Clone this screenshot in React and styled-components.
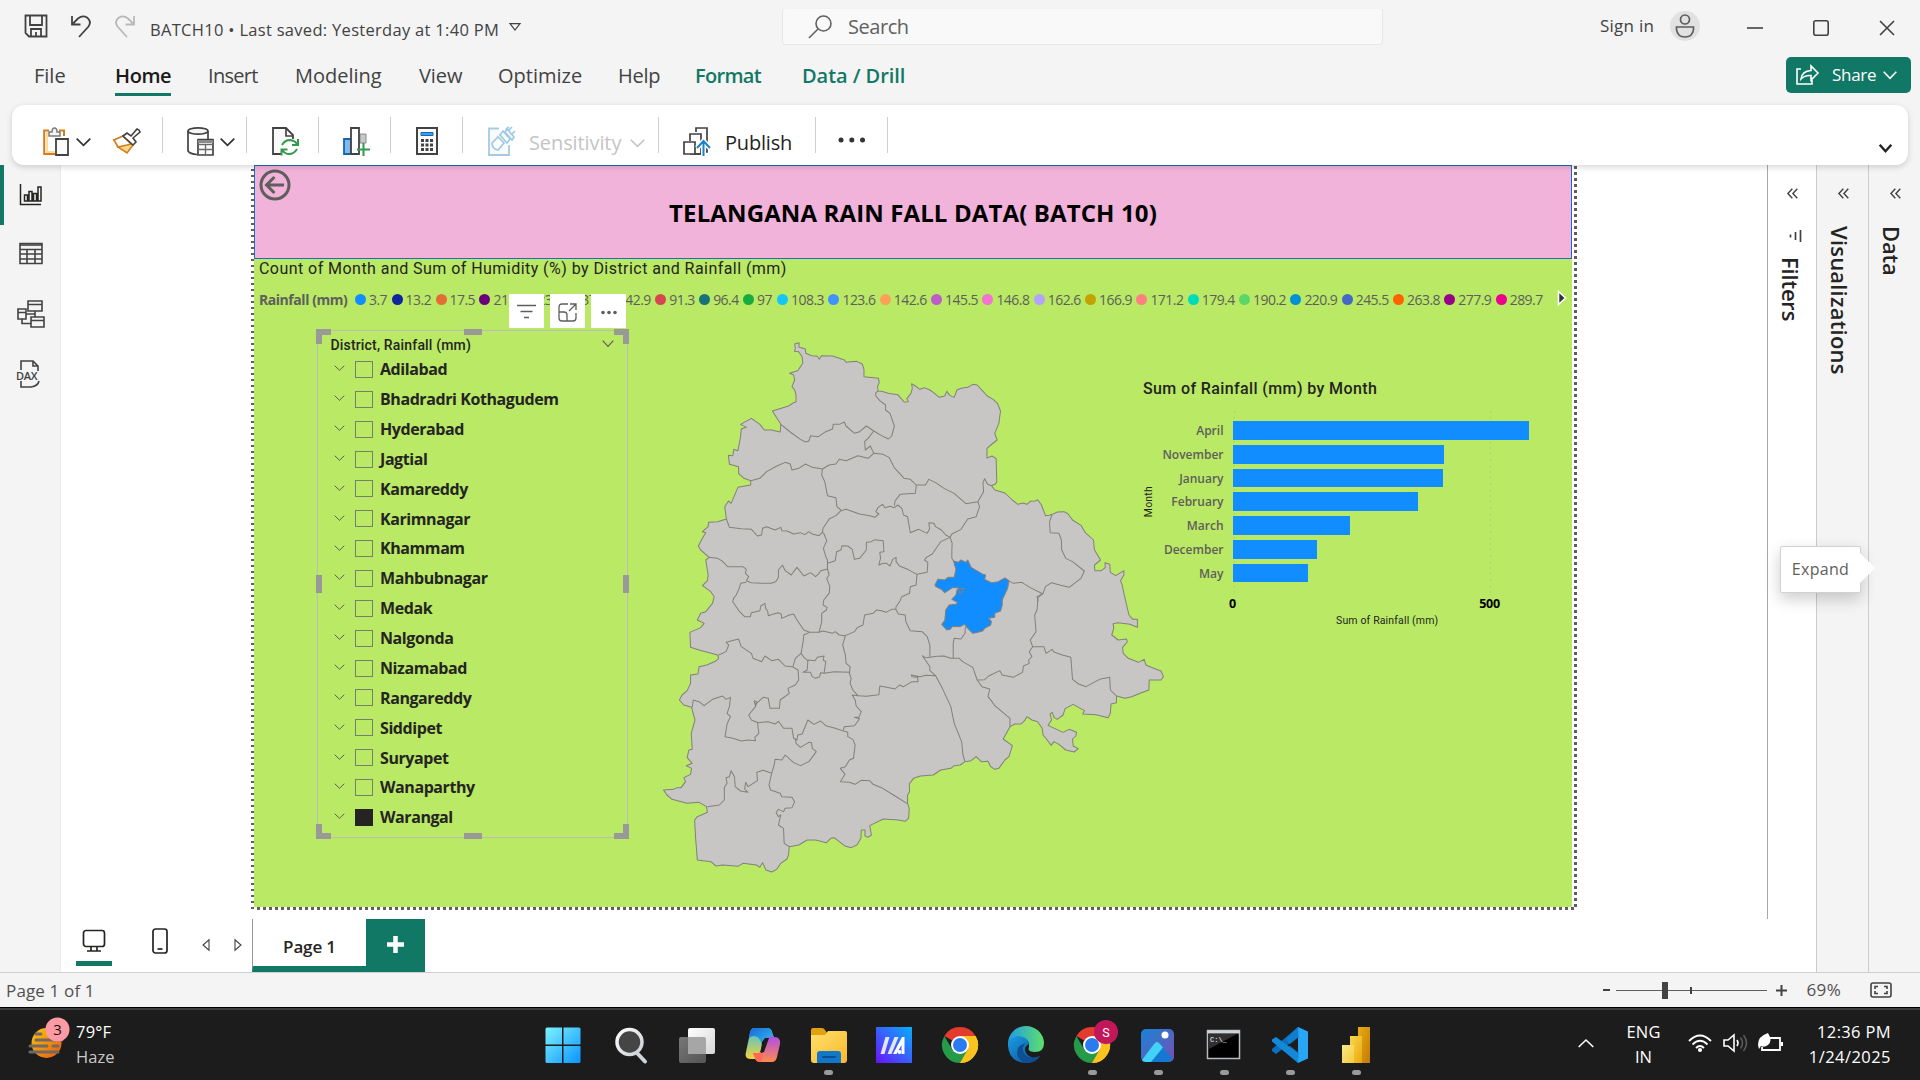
import React from "react";
import styled, { createGlobalStyle, css } from "styled-components";

const ui = '"Open Sans", "Noto Sans", sans-serif';
const din = 'Roboto, "Open Sans", sans-serif';
const teal = "#117865";

const Global = createGlobalStyle`
  * { box-sizing: border-box; }
  html, body { margin: 0; background: #f4f4f4; }
  body { font-family: ${ui}; overflow: hidden; }
  svg { display: block; flex: none; overflow: visible; }
`;

const Screen = styled.div`
  width: 1920px;
  height: 1080px;
  display: flex;
  flex-direction: column;
  background: #f4f4f4;
  overflow: hidden;
`;

const Label = styled.span`
  font-family: ${(p) => (p.$din ? din : ui)};
  font-size: ${(p) => p.$size || 16}px;
  font-weight: ${(p) => p.$weight || 400};
  letter-spacing: ${(p) => p.$ls || 0}px;
  color: ${(p) => p.$color || "#252423"};
  line-height: 1.2;
  white-space: nowrap;
  margin-left: ${(p) => p.$ml || 0}px;
  padding-top: ${(p) => p.$pt || 0}px;
`;

/* ---------- title bar ---------- */
const TitleBar = styled.header`
  height: 52px;
  display: flex;
  flex: none;
  align-items: flex-start;
`;
const QuickAccess = styled.div`
  display: flex;
  gap: 22px;
  padding: 14px 0 0 24px;
  width: 150px;
`;
const FileName = styled.div`
  display: flex;
  gap: 10px;
  padding-top: 20px;
  width: 632px;
`;
const SearchBox = styled.div`
  margin-top: 8px;
  width: 601px;
  height: 37px;
  display: flex;
  align-items: center;
  padding-left: 25px;
  background: #f9f9f9;
  border: 1px solid #e6e6e6;
  border-top-color: #f2f2f2;
  border-radius: 4px;
`;
const Account = styled.div`
  display: flex;
  align-items: center;
  height: 52px;
  margin-left: 217px;
  gap: 16px;
`;
const WindowButtons = styled.div`
  display: flex;
  align-items: center;
  height: 55px;
  margin-left: 47px;
  gap: 50px;
`;

/* ---------- ribbon ---------- */
const TabRow = styled.nav`
  height: 53px;
  flex: none;
  display: flex;
  position: relative;
  padding-left: 34px;
`;
const Tab = styled.div`
  width: ${(p) => p.$w}px;
  height: 45px;
  padding-top: 12px;
`;
const TabText = styled.div`
  width: max-content;
  font-size: 20px;
  line-height: 24px;
  letter-spacing: ${(p) => p.$ls}px;
  font-weight: ${(p) => (p.$kind ? 600 : 400)};
  color: ${(p) => (p.$kind === "context" ? teal : p.$kind === "active" ? "#1b1a19" : "#424242")};
  padding-bottom: 5px;
  border-bottom: 3px solid ${(p) => (p.$kind === "active" ? teal : "transparent")};
`;
const ShareButton = styled.button`
  margin: 5px 9px 0 auto;
  width: 125px;
  height: 36px;
  padding: 0 0 0 10px;
  display: flex;
  align-items: center;
  border: 0;
  border-radius: 5px;
  background: ${teal};
`;
const Ribbon = styled.div`
  height: 60px;
  flex: none;
  margin: 0 12px;
  padding: 0 16px 0 31px;
  display: flex;
  align-items: center;
  background: #fff;
  border-radius: 12px;
  box-shadow: 0 2px 6px rgba(0, 0, 0, 0.16);
  position: relative;
  z-index: 2;
`;
const Group = styled.div`
  width: ${(p) => p.$w}px;
  height: 36px;
  flex: none;
  padding-left: ${(p) => p.$pl || 0}px;
  display: flex;
  align-items: center;
  border-right: 1px solid #cfcfcf;
  padding-top: 12px;
`;
const RibbonEnd = styled.div`
  margin: 26px 0 0 auto;
`;

/* ---------- workspace ---------- */
const Workspace = styled.div`
  height: 807px;
  flex: none;
  display: flex;
`;
const Rail = styled.aside`
  width: 61px;
  border-right: 1px solid #ebebeb;
  background: #f4f4f4;
`;
const RailItem = styled.div`
  height: 59.6px;
  display: flex;
  align-items: center;
  padding-left: 13px;
  border-left: 4px solid ${(p) => (p.$active ? teal : "transparent")};
`;
const Main = styled.main`
  width: 1706px;
  background: #fff;
  display: flex;
  flex-direction: column;
`;
const Frame = styled.div`
  width: 1326px;
  height: 745px;
  flex: none;
  margin-left: 190px;
  padding: 0 5px 3px 3px;
  background:
    repeating-linear-gradient(to bottom, #fff 0 4px, #605e5c 4px 7px, #fff 7px 10px) 0 0 / 3px 6px repeat-y,
    repeating-linear-gradient(to right, #605e5c 0 3px, #fff 3px 6px) 0 742px / 6px 3px repeat-x,
    linear-gradient(to bottom, #fff 50%, #605e5c 50%) 1323px -2px / 3px 6px repeat-y;
`;
const Report = styled.section`
  height: 742px;
  background: #b9e965;
  display: flex;
  flex-direction: column;
`;
const Banner = styled.div`
  height: 94px;
  flex: none;
  border: 1px solid #1b6ec2;
  background: #f2b3da;
  display: grid;
  grid-template-columns: 40px 1fr 40px;
  justify-items: center;
`;
const BannerTitle = styled.h1`
  margin: 33px 0 0;
  font-size: 24px;
  line-height: 28px;
  font-weight: 700;
  letter-spacing: 0.12px;
  color: #000;
`;
const BackArrow = styled.div`
  padding: 3px 0 0 0;
`;
const LegendTitle = styled.div`
  height: 20px;
  padding-left: 5px;
  font: 400 16px/20px ${din};
  letter-spacing: 0.45px;
  color: #252423;
`;
const Legend = styled.div`
  height: 40px;
  display: flex;
  align-items: center;
  padding: 0 0 0 5px;
`;
const LegendName = styled.div`
  width: 96px;
  font-size: 14px;
  font-weight: 700;
  letter-spacing: -0.45px;
  color: #605e5c;
`;
const LegendItem = styled.div`
  width: ${(p) => p.$w}px;
  flex: none;
  display: flex;
  align-items: center;
  gap: 3px;
  font-size: 14px;
  letter-spacing: -0.55px;
  color: #605e5c;
  &::before {
    content: "";
    width: 11px;
    height: 11px;
    flex: none;
    border-radius: 50%;
    background: ${(p) => p.$c};
  }
`;
const LegendNext = styled.div`
  margin: -2px 0 0 10px;
`;
const Visuals = styled.div`
  display: flex;
`;

/* ---------- slicer ---------- */
const Slicer = styled.div`
  position: relative;
  margin: 11px 0 0 63px;
  width: 311px;
  height: 508px;
  flex: none;
  border: 1px solid #bdbdb8;
  padding: 6px 13px 0 12.5px;
`;
const Handle = styled.i`
  position: absolute;
  ${(p) => p.$at}
`;
const HoverBar = styled.div`
  position: absolute;
  right: 1px;
  top: -37px;
  display: flex;
  gap: 6px;
`;
const HoverButton = styled.div`
  width: 35px;
  height: 34px;
  display: grid;
  place-items: center;
  background: #fff;
`;
const SlicerHead = styled.div`
  display: flex;
  justify-content: space-between;
  height: 17.5px;
`;
const SlicerRow = styled.div`
  height: 29.87px;
  display: flex;
  align-items: center;
  padding-left: 3.5px;
`;
const Check = styled.span`
  width: 18px;
  height: 17px;
  margin: 0 7px 0 10px;
  flex: none;
  border: 1px solid ${(p) => (p.$on ? "#252423" : "#74806a")};
  background: ${(p) => (p.$on ? "#252423" : "transparent")};
`;

/* ---------- chart ---------- */
const MapBox = styled.div`
  margin: 11px 0 0 22px;
  width: 492px;
  flex: none;
`;
const Chart = styled.div`
  margin-top: 57px;
  width: 424px;
`;
const ChartTitle = styled.div`
  font: 500 16px/24px ${din};
  letter-spacing: 0.38px;
  color: #252423;
  padding: 1px 0 0 1px;
`;
const Plot = styled.div`
  display: grid;
  grid-template-columns: 19px 62.500px 1fr;
  margin-top: 10px;
`;
const AxisName = styled.div`
  writing-mode: vertical-rl;
  transform: rotate(180deg);
  justify-self: start;
  align-self: center;
  font: 400 10.5px/12px ${din};
  letter-spacing: 0.2px;
  color: #252423;
  margin: 0 0 2px 1px;
`;
const Categories = styled.div`
  padding-top: 8px;
`;
const Category = styled.div`
  height: 23.75px;
  line-height: 23.75px;
  text-align: right;
  font-size: 12px;
  font-weight: 600;
  color: #605e5c;
`;
const Bars = styled.div`
  margin-left: 9px;
  height: 183px;
  padding-top: 10px;
  display: flex;
  flex-direction: column;
  gap: 5px;
  background:
    linear-gradient(to bottom, #abd277 33%, transparent 33%) 1px 0 / 1px 6px repeat-y,
    linear-gradient(to bottom, #abd277 33%, transparent 33%) 257px 0 / 1px 6px repeat-y;
`;
const Bar = styled.div`
  height: 18.75px;
  flex: none;
  background: #118dff;
`;
const Ticks = styled.div`
  display: flex;
  margin: 1px 0 0 87px;
  font-size: 12.5px;
  line-height: 18px;
  font-weight: 700;
  letter-spacing: -0.2px;
  color: #000;
  justify-content: space-between;
  width: 271px;
`;
const ValueAxis = styled.div`
  margin: 1px 0 0 194px;
  font: 400 10.5px/14px ${din};
  letter-spacing: 0.15px;
  color: #252423;
`;

/* ---------- page bar ---------- */
const PageBar = styled.div`
  height: 53px;
  margin-top: 9px;
  display: flex;
`;
const ViewModes = styled.div`
  display: flex;
  width: 130px;
  padding-left: 15px;
  gap: 30px;
`;
const Mode = styled.div`
  width: 36px;
  height: 47px;
  padding-top: 9px;
  display: flex;
  justify-content: center;
  border-bottom: 0;
  background: ${(p) => (p.$on ? `linear-gradient(${teal}, ${teal}) 0 42px / 36px 5px no-repeat` : "none")};
`;
const PageArrows = styled.div`
  display: flex;
  gap: 24px;
  padding: 20px 0 0 11px;
  width: 61px;
`;
const PageTab = styled.div`
  width: 114px;
  height: 53px;
  display: grid;
  place-items: center;
  border-left: 1px solid #999;
  border-bottom: 6px solid ${teal};
`;
const AddPage = styled.div`
  width: 59px;
  display: grid;
  place-items: center;
  padding-bottom: 2px;
  background: ${teal};
`;

/* ---------- side panes ---------- */
const Pane = styled.aside`
  width: ${(p) => p.$w}px;
  flex: none;
  background: ${(p) => (p.$white ? "#fff" : "#f4f4f4")};
  border-left: ${(p) => (p.$white ? 0 : 1)}px solid #cccccc;
  display: flex;
  flex-direction: column;
  align-items: center;
  padding-top: 23px;
  position: relative;
`;
const FilterPane = styled(Pane)`
  background: linear-gradient(#a8a8a8, #a8a8a8) 0 0 / 1px 754px no-repeat #fff;
`;
const PaneName = styled.div`
  writing-mode: vertical-rl;
  font-size: 22px;
  line-height: 26px;
  font-weight: 600;
  letter-spacing: ${(p) => p.$ls}px;
  color: #252423;
  margin-top: ${(p) => p.$mt}px;
  margin-right: ${(p) => p.$mr || 0}px;
`;
const Tooltip = styled.div`
  position: absolute;
  left: 13px;
  top: 381px;
  width: 81px;
  height: 47px;
  z-index: 3;
  display: grid;
  place-items: center;
  background: #fff;
  border: 1px solid #d2d2d2;
  border-radius: 2px;
  box-shadow: 0 6px 16px rgba(0, 0, 0, 0.2);
  &::after {
    content: "";
    position: absolute;
    left: 79px;
    top: 6px;
    border: 15px solid transparent;
    border-left-color: #fff;
    border-right: 0;
  }
`;

/* ---------- status bar ---------- */
const StatusBar = styled.footer`
  height: 35px;
  flex: none;
  display: flex;
  align-items: center;
  padding: 0 28px 0 6px;
  border-top: 1px solid #cfcfcf;
`;
const Spacer = styled.div`
  flex: 1;
`;
const ZoomTrack = styled.div`
  width: 151px;
  height: 17px;
  margin: 0 9px 0 6px;
  background:
    linear-gradient(#424242, #424242) 46px 0 / 6px 17px no-repeat,
    linear-gradient(#424242, #424242) 74px 5px / 2px 7px no-repeat,
    linear-gradient(#605e5c, #605e5c) 0 8px / 151px 1px no-repeat;
`;

/* ---------- taskbar ---------- */
const Taskbar = styled.div`
  height: 73px;
  flex: none;
  display: flex;
  background: #1c1c1c;
  border-top: 1px solid #000;
  box-shadow: inset 0 2px 0 #3d3d3d;
`;
const Weather = styled.div`
  display: flex;
  width: 530px;
  padding: 10px 0 0 28px;
`;
const Lines = styled.div`
  display: flex;
  flex-direction: column;
  align-items: ${(p) => p.$align || "flex-start"};
  gap: 5px;
  width: ${(p) => p.$w}px;
  padding-top: 4px;
`;
const Apps = styled.div`
  display: flex;
  width: 860px;
`;
const AppSlot = styled.div`
  width: 65.94px;
  flex: none;
  padding-top: 18px;
  display: flex;
  flex-direction: column;
  align-items: center;
  gap: 6px;
  &:first-child {
    margin-right: 1.8px;
  }
  &::after {
    content: "";
    width: 9px;
    height: 5px;
    border-radius: 3px;
    background: ${(p) => (p.$run ? "#9a9a9a" : "transparent")};
  }
`;
const Tray = styled.div`
  flex: 1;
  display: flex;
  justify-content: flex-end;
  padding: 10px 29px 0 0;
`;
const TrayIcon = styled.div`
  width: ${(p) => p.$w}px;
  padding-top: ${(p) => p.$pt}px;
`;

/* ---------- drawing helpers ---------- */
const Line = styled.svg.attrs({ fill: "none" })`
  stroke: ${(p) => p.$c || "#424242"};
  stroke-width: ${(p) => p.$sw || 1.6};
  margin-left: ${(p) => p.$ml || 0}px;
  margin-top: ${(p) => p.$mt || 0}px;
`;

const Chevron = ({ w = 15, h = 8, c, sw, ml, mt }) => (
  <Line width={w} height={h} viewBox={`0 0 ${w} ${h}`} $c={c} $sw={sw} $ml={ml} $mt={mt}>
    <path d={`M.7.7 L${w / 2} ${h - 0.7} L${w - 0.7} .7`} />
  </Line>
);
const Collapse = () => (
  <Line width="11" height="11" viewBox="0 0 11 11" $sw={1.4} $ml={1}>
    <path d="M5.3.7L.9 5.5l4.4 4.8M10.3.7L5.9 5.5l4.4 4.8" />
  </Line>
);

/* ---------- map data ---------- */
const OUTLINE =
  "428,42 441,38 441,52 459,56 461,70 478,77 495,79 501,88 507,77 540,78 558,84 575,90 580,97 595,95 612,94 628,102 633,118 633,140 676,145 678,158 673,170 675,183 685,184 705,190 733,194 745,208 752,216 764,215 760,206 772,190 776,175 774,161 785,168 798,178 812,173 828,180 838,187 856,202 872,198 878,184 887,196 900,202 908,180 920,175 940,172 955,163 968,165 985,184 998,198 1015,208 1028,220 1037,243 1032,280 1020,310 1027,330 1012,342 997,355 997,384 1012,378 1024,386 1026,455 1022,462 1010,467 1020,480 1050,489 1072,510 1088,523 1104,519 1115,523 1125,514 1140,513 1147,509 1158,525 1170,557 1182,556 1190,553 1205,546 1225,545 1237,552 1250,570 1275,586 1288,608 1312,630 1315,660 1333,690 1315,705 1316,722 1335,722 1347,713 1346,698 1360,703 1362,727 1378,737 1402,722 1402,735 1392,752 1397,765 1402,790 1410,825 1417,855 1428,868 1442,868 1442,892 1420,883 1385,878 1370,881 1372,895 1366,915 1385,930 1410,927 1412,936 1398,952 1400,970 1415,985 1445,997 1462,988 1467,1005 1490,1015 1512,1023 1519,1040 1512,1050 1477,1050 1476,1080 1450,1090 1425,1100 1405,1105 1380,1098 1380,1118 1364,1122 1362,1150 1355,1163 1320,1154 1280,1152 1285,1142 1252,1123 1228,1136 1222,1155 1205,1168 1195,1162 1190,1147 1184,1152 1188,1170 1178,1186 1222,1207 1240,1198 1262,1207 1260,1218 1250,1227 1252,1248 1267,1256 1255,1266 1230,1260 1210,1243 1195,1235 1187,1246 1175,1230 1163,1215 1160,1195 1147,1175 1130,1170 1115,1160 1108,1172 1098,1182 1080,1182 1065,1190 1045,1227 1072,1247 1062,1280 1050,1290 1032,1315 1020,1318 1008,1310 1000,1294 980,1295 965,1280 950,1292 932,1295 918,1305 900,1307 890,1315 860,1320 838,1335 800,1338 780,1345 767,1362 768,1385 762,1395 762,1420 767,1435 765,1465 755,1474 735,1470 690,1467 650,1487 655,1515 645,1522 636,1518 636,1500 625,1500 624,1525 612,1545 595,1553 575,1547 560,1535 545,1523 535,1525 522,1538 490,1530 465,1530 440,1545 412,1550 410,1575 405,1587 387,1600 375,1618 360,1626 343,1620 333,1598 325,1612 315,1605 275,1600 260,1609 215,1605 195,1608 180,1595 140,1590 135,1525 132,1470 140,1460 170,1447 167,1430 145,1417 110,1420 65,1408 50,1395 40,1380 70,1378 80,1373 92,1373 105,1355 100,1343 120,1333 123,1315 107,1307 125,1300 110,1283 115,1260 125,1258 122,1210 133,1170 123,1132 100,1125 87,1110 95,1095 110,1082 120,1060 120,1035 142,1032 145,1010 168,1005 195,993 203,985 200,975 170,967 145,960 120,952 118,907 150,893 160,880 140,870 150,850 165,845 185,820 190,800 180,785 155,767 170,752 172,735 165,690 175,682 150,660 143,648 155,625 165,608 155,605 172,590 173,577 200,575 226,567 221,530 232,513 240,520 260,472 298,465 298,452 278,445 262,430 262,410 235,403 232,376 245,377 248,358 260,362 268,320 270,297 285,292 268,283 300,265 325,283 338,300 360,300 385,306 387,283 362,243 410,228 425,218 432,215 432,195 428,180 420,170 428,150 425,135 413,130 437,122 452,100 450,80 440,65 427,64 430,55";
const BORDERS = [
  "387,283 415,306 445,328 460,336 470,333 475,317 498,320 520,305 540,297 542,283 560,283 575,276 580,288 605,310 620,305 640,288 662,303 685,317 705,327 715,318 723,288 710,250 697,240 697,225 680,212 668,198 668,188 675,183",
  "662,303 645,325 635,335 637,360 652,348 662,370",
  "298,452 325,445 345,425 375,408 400,397 415,402 420,420 440,415 460,402 480,412 510,417 530,405 550,402 560,388 580,392 615,377 645,385 662,370 690,373 708,383 722,412 752,445 770,448 788,465 815,465 825,448 845,458 870,475 900,490 920,508 935,521 970,515 987,485 985,458 990,446 998,462 1010,467",
  "510,417 508,435 517,455 525,497 550,503 553,530 565,540",
  "788,465 785,490 740,493 725,513 723,527",
  "565,542 580,538 620,552 650,557 665,562 677,552 668,545 675,532 688,523 695,533 710,529 723,533 733,525 745,535 750,555 762,560 770,608 795,598 820,610 827,597 825,578 840,580 845,590 862,600 875,615 888,622",
  "970,515 975,530 965,560 940,567 920,598 893,612 888,622",
  "565,542 550,557 530,567 512,595 510,607 515,612 523,632 513,655 520,680 525,690 525,717",
  "226,567 235,592 270,596 300,598 318,618 330,615 333,595 345,590 370,600 387,592 390,602 405,603 425,612 445,608 458,614 470,605 480,612 500,617 512,605",
  "525,700 548,692 552,665 565,660 568,647 585,648 598,658 605,688 620,685 640,660 640,637 655,635 665,629 690,632 692,665 680,667 682,685 677,705 690,700 700,700 710,708 718,688 728,682 728,695 738,708 762,718 790,733 820,727 822,697 812,690 818,682 835,672 860,635 888,622",
  "888,622 894,640 893,660 893,685 902,700",
  "175,682 200,685 212,692 230,710 275,710 285,718 282,730 292,740 285,752 300,758 330,760 358,760 372,755 380,742 380,720 392,705 400,722 418,735 425,725 435,712 455,738 475,728 490,740 500,730 505,722 525,717",
  "285,757 268,760 264,775 255,795 247,805 245,815 265,845 280,860 297,860 300,848 325,842 328,828 340,820 342,835 348,843 350,857 378,848 388,852 390,865 412,855 425,852 435,870 455,900 472,907 500,907",
  "525,717 530,735 523,745 532,770 530,790 514,810 512,825 524,832 522,840 508,850 508,875 500,907",
  "790,733 787,765 770,770 768,790 745,800 740,812 728,830 727,838",
  "1190,553 1182,575 1184,608 1210,610 1217,630 1218,660 1230,685 1250,695 1285,723 1275,745 1240,772 1215,766 1188,758 1170,770 1163,790 1145,800 1148,815",
  "1060,752 1075,760 1100,757 1125,773 1163,792",
  "727,838 735,852 755,855 757,875 770,902 805,905 820,920 828,945 828,980",
  "500,907 512,903 540,910 548,905 560,915 578,917 605,905 613,893 630,885 635,855 660,850 670,840 685,842 698,847 715,838 727,838",
  "578,917 570,945 578,975 580,1000 592,1010 590,1030 595,1045 592,1060 600,1080 615,1097 598,1095 607,1110 610,1128 625,1145 618,1162 605,1162 620,1166 605,1187 575,1190 572,1200",
  "615,1097 640,1099 677,1094 680,1068 700,1072 725,1077 738,1065 750,1070 775,1055 793,1055 792,1042 775,1040 773,1035 800,1040 815,1036 845,1037",
  "815,983 806,977 828,1010 828,1022 845,1037 865,1075 890,1130 900,1180 922,1235 926,1275 932,1295",
  "815,983 850,979 870,978 890,985 915,985 925,995 955,1012 968,1050",
  "968,1050 990,1049 1002,1038 1035,1022 1042,1035 1075,1042 1102,1027 1105,1008 1122,1000 1120,990 1130,980 1122,965 1132,950",
  "968,1050 982,1070 1005,1077 1000,1100 1012,1115 1020,1127 1065,1165 1065,1190",
  "933,890 932,910 920,927 900,925 897,940 897,985",
  "1163,790 1148,803 1145,840 1138,855 1142,905 1125,930 1132,950 1165,950 1172,970 1190,958 1195,966 1220,975 1245,982 1250,1048 1268,1062 1290,1070 1330,1048 1360,1042 1362,1080 1380,1098",
  "203,975 225,965 233,945 225,937 262,927 270,950 300,970 305,985 330,995 340,978 360,992 380,988 400,1008 420,1010 438,1020 440,1050 430,1065 408,1075 412,1090 385,1110 383,1135 355,1135 350,1105 335,1102 315,1120 312,1130 292,1155 300,1170 320,1178 350,1175 370,1182 380,1174 395,1195 420,1195 425,1225 435,1230 437,1215 450,1212 467,1170 485,1183 505,1173 520,1187 545,1194 570,1202 585,1207 585,1220 600,1228 607,1245 602,1285 590,1290 578,1310 563,1315 577,1333 563,1355 590,1357 607,1363 625,1351 650,1352 660,1363 685,1373 725,1398 760,1420",
  "472,907 455,915 453,935 447,970 430,985 423,1010",
  "447,970 455,982 467,992 465,1020 452,1027 475,1027 480,1040 490,1045 502,1040 505,1028 515,1030 520,995 512,990 515,978 495,982 488,992 467,990",
  "515,1030 545,1025 592,1027",
  "125,1132 128,1110 145,1115 160,1127 185,1108 215,1098 225,1108 238,1102 235,1130 228,1150 238,1160 228,1182 222,1220 245,1225 270,1233 290,1230 312,1232 310,1222 322,1210 318,1178",
  "308,1112 315,1115 312,1127 308,1112",
  "430,1225 432,1240 445,1252 470,1237 478,1238 480,1255 492,1265 470,1295 445,1307 425,1298 400,1275 390,1290 370,1288 368,1302 360,1330 352,1365 357,1380 385,1390 390,1400 420,1402 428,1415 420,1433 400,1435 395,1445 380,1438 373,1448 380,1460 387,1455 380,1485 395,1495 397,1540 412,1550",
  "360,1330 335,1321 316,1327 318,1352 290,1370 283,1357 280,1377 290,1387 268,1383 252,1370 250,1340 240,1322 235,1340 225,1343 228,1360 220,1372 220,1410 205,1425 170,1430",
];
const SELECTED =
  "898,693 912,697 920,690 935,697 940,690 950,712 985,733 993,735 990,748 1010,758 1030,755 1050,744 1062,752 1058,775 1042,810 1042,825 1037,843 1020,850 1020,862 1002,865 1010,875 1008,885 990,895 985,902 965,908 955,910 943,898 930,883 918,890 895,889 888,898 878,900 863,883 872,872 875,840 885,825 907,822 909,817 893,808 905,795 909,778 930,775 917,793 912,773 895,773 872,788 862,778 846,770 843,765 852,748 872,750 882,742 900,742 905,718";

const Telangana = () => (
  <svg width="530" height="546" viewBox="0 0 1568 1638" preserveAspectRatio="none" stroke="#83817b" strokeWidth="3" strokeLinejoin="round">
    <polygon points={OUTLINE} fill="#c8c6c4" />
    <g fill="none">
      {BORDERS.map((b) => (
        <polyline key={b} points={b} />
      ))}
    </g>
    <polygon points={SELECTED} fill="#118dff" />
  </svg>
);

/* ---------- data ---------- */
const TABS = [
  ["File", 81, "", 0],
  ["Home", 93, "active", -0.4],
  ["Insert", 87, "", -0.7],
  ["Modeling", 124, "", 0],
  ["View", 79, "", -0.1],
  ["Optimize", 120, "", 0],
  ["Help", 77, "", -0.3],
  ["Format", 107, "context", -0.7],
  ["Data / Drill", 120, "context", -0.05],
];
const LEGEND = [
  ["3.7", "#118dff"], ["13.2", "#12239e"], ["17.5", "#e66c37"], ["21.4", "#6b007b"],
  ["23.1", "#e044a7"], ["37.6", "#744ec2"], ["42.9", "#d9b300"], ["91.3", "#d64550"],
  ["96.4", "#197278"], ["97", "#1aab40"], ["108.3", "#15c6f4"], ["123.6", "#4092ff"],
  ["142.6", "#ffa058"], ["145.5", "#be5dc9"], ["146.8", "#f472d0"], ["162.6", "#b5a1ff"],
  ["166.9", "#c4a200"], ["171.2", "#ff8080"], ["179.4", "#00dbbc"], ["190.2", "#5bd667"],
  ["220.9", "#0091d5"], ["245.5", "#4668c5"], ["263.8", "#ff6300"], ["277.9", "#99008a"],
  ["289.7", "#ec008c"],
];
const LEGEND_WIDTH = { 2: 34, 3: 36.6, 4: 43.95, 5: 51.34 };
const DISTRICTS = ["Adilabad", "Bhadradri Kothagudem", "Hyderabad", "Jagtial", "Kamareddy", "Karimnagar", "Khammam", "Mahbubnagar", "Medak", "Nalgonda", "Nizamabad", "Rangareddy", "Siddipet", "Suryapet", "Wanaparthy", "Warangal"];
const MONTHS = [["April", 296.5], ["November", 211], ["January", 210], ["February", 185], ["March", 117], ["December", 84], ["May", 75]];

const g = "#9a9999";
const HANDLES = [
  css`left: -2px; top: -2px; width: 15px; height: 15px; border-left: 6px solid ${g}; border-top: 6px solid ${g};`,
  css`right: -2px; top: -2px; width: 15px; height: 15px; border-right: 6px solid ${g}; border-top: 6px solid ${g};`,
  css`left: -2px; bottom: -2px; width: 15px; height: 15px; border-left: 6px solid ${g}; border-bottom: 6px solid ${g};`,
  css`right: -2px; bottom: -2px; width: 15px; height: 15px; border-right: 6px solid ${g}; border-bottom: 6px solid ${g};`,
  css`left: 146px; top: -2px; width: 18px; height: 6px; background: ${g};`,
  css`left: 146px; bottom: -2px; width: 18px; height: 6px; background: ${g};`,
  css`left: -2px; top: 244px; width: 6px; height: 18px; background: ${g};`,
  css`right: -2px; top: 244px; width: 6px; height: 18px; background: ${g};`,
];

/* ---------- taskbar icons ---------- */
const Ico = ({ children }) => (
  <svg width="36" height="38" viewBox="0 0 36 38">{children}</svg>
);
const Chrome = () => (
  <g>
    <path d="M18 19L2.4 10A18 18 0 0 1 33.6 10z" fill="#e33b2e" />
    <path d="M18 19L33.6 10A18 18 0 0 1 18 37z" fill="#fcc31e" />
    <path d="M18 10H33.6A18 18 0 0 1 18 37L25.8 23.5z" fill="#fcc31e" />
    <path d="M18 37A18 18 0 0 1 2.4 10L10.2 23.5 18 28 25.8 23.5z" fill="#259b48" />
    <circle cx="18" cy="19" r="9" fill="#fff" />
    <circle cx="18" cy="19" r="7" fill="#2b7bf0" />
  </g>
);
const Grad = ({ id, a, b, y1 = 0, x2 = 1, y2 = 1 }) => (
  <linearGradient id={id} x1="0" y1={y1} x2={x2} y2={y2}>
    <stop offset="0" stopColor={a} />
    <stop offset="1" stopColor={b} />
  </linearGradient>
);

const APPS = [
  [false, <Ico><Grad id="win" a="#7ef2ff" b="#0a94ff" /><path fill="url(#win)" d="M.5 3Q.5 1.500 2 1.500H17v17H.5zM18.500 1.500H34q1.500 0 1.500 1.500v15.500h-17zM.5 20H17v17H2Q.5 37 .5 35.500zM18.500 20h17v15.500q0 1.500-1.500 1.500H18.500z" /></Ico>],
  [false, <Ico><Grad id="glass" a="#ffffff" b="#c9ced4" /><path d="M24 27l8 8.500" stroke="#d0d5da" strokeWidth="4" strokeLinecap="round" /><circle cx="16.500" cy="16" r="12.500" fill="#454545" stroke="url(#glass)" strokeWidth="3.500" /></Ico>],
  [false, <Ico><Grad id="tv" a="#fff" b="#d6d6d6" /><Grad id="tv2" a="#777" b="#555" /><rect x="0" y="11" width="27" height="26" rx="2" fill="url(#tv2)" /><rect x="9" y="2" width="27" height="26" rx="2" fill="url(#tv)" /><path d="M9 11h16q2 0 2 2v15H11q-2 0-2-2z" fill="#a6a6a6" /></Ico>],
  [false, <Ico><Grad id="c1" a="#1667dd" b="#3ec4e8" /><Grad id="c2" a="#35c0e8" b="#f5d23c" x2={0} /><Grad id="c3" a="#b04fe6" b="#ff8a4c" x2={0} /><path d="M9 2h13q4 0 5 4l2 6h-6q-4 0-5 4l-5 17H6q-7 0-5-7L5 7q1-5 4-5z" fill="url(#c2)" /><path d="M9 2h13q4 0 5 4l2 6h-6q-4 0-5 4l-1 4q-2-10-8-10Q6 10 4 12q1-10 5-10z" fill="url(#c1)" /><path d="M27 36H15q-4 0-5-4l-2-5h5q4 0 5-4l5-12h6q7 0 6 7l-3 13q-1 5-5 5z" fill="url(#c3)" /><path d="M15 36q-4 0-5-4l-2-5h5q4 0 5-4l-1 9q0 4-2 4z" fill="#ff6a54" /><path d="M17 16l3-4h4l-5 14-3 1z" fill="#1c1c1c" /></Ico>],
  [true, <Ico><Grad id="fold" a="#ffe06a" b="#f8b92e" /><path d="M0 4q0-2 2-2h9q2 0 3 2l2 3v5H0z" fill="#e2a10f" /><path d="M0 9h14l3-4h17q2 0 2 2v27q0 3-3 3H3q-3 0-3-3z" fill="url(#fold)" /><path d="M6 37V28q0-3 3-3h18q3 0 3 3v9z" fill="#1276c9" /><path d="M12 31h12" stroke="#0a4f90" strokeWidth="2" strokeLinecap="round" /></Ico>],
  [false, <Ico><Grad id="asus" a="#6a12fa" b="#06b0ff" y1={1} y2={0} /><path d="M0 1h36v36H0z" fill="url(#asus)" /><path d="M9.500 11h4L8.500 28H4.500zM18.500 11h4l-7 17h-4z" fill="#fff" opacity=".85" /><path d="M28.500 11v17h-3V19l-5 9h-3.500L26 11z" fill="#fff" /><circle cx="23.500" cy="26" r="2" fill="#fff" /></Ico>],
  [false, <Ico><Chrome /></Ico>],
  [false, <Ico><Grad id="e1" a="#1f9be8" b="#5fe06a" y2={0} /><Grad id="e2" a="#1b9de2" b="#0b4c9c" /><path d="M0 18A18 17.500 0 0 1 36 17q0 9-9 9-8 0-6-5 1-9-8-8Q3 13 0 22z" fill="url(#e1)" /><path d="M0 18q2-8 11-8 9 1 10 8-6 3-3 9 5 7 14 3-5 7-14 7Q0 36 0 18z" fill="url(#e2)" /><path d="M18 17q-5 4-2 10 6 8 16 3-4 7-13 7-9-2-10-10 0-8 9-10z" fill="#0d4f92" /></Ico>],
  [true, <Ico><Chrome /><circle cx="32" cy="6" r="12" fill="#c2185b" /><text x="32" y="10.500" textAnchor="middle" fontSize="12.500" fontFamily="Roboto, sans-serif" fill="#fff">S</text></Ico>],
  [true, <Ico><Grad id="ph" a="#1684d8" b="#7a4fb0" /><rect x="1" y="3" width="33" height="33" rx="5" fill="url(#ph)" /><path d="M2 34L14 18q3-4 6 0l13 15q-2 3-5 3H6q-3 0-4-2z" fill="#1778d2" /><path d="M2 34L14 18q3-4 6 0l3 3.500L11 36H6q-3 0-4-2z" fill="#42d2f8" /><circle cx="25" cy="9" r="3.500" fill="#fff" /></Ico>],
  [true, <Ico><rect x="1.500" y="4.500" width="32" height="28" fill="#000" stroke="#b8bcc0" strokeWidth="1.500" /><path d="M1.500 4.500h32v3h-32z" fill="#cfd4d8" /><path d="M3 8h28L3 23z" fill="#444" opacity=".7" /><text x="4" y="16" fontSize="7" fontFamily="Liberation Mono, monospace" fill="#fff">C:\_</text></Ico>],
  [true, <Ico><path d="M26 1l10 4.500v27L26 37z" fill="#28a5f5" /><path d="M26 1v10L4 28 0 25v-2z" fill="#0a6fbf" /><path d="M26 37V27L4 11 0 13.500v2z" fill="#1489d8" /><path d="M26 1l1 11-8 7 8 7-1 11-12-12 4-6-4-6z" fill="#1489d8" opacity=".6" /><path d="M26 12v14l-9-7z" fill="#1c1c1c" /></Ico>],
  [true, <Ico><Grad id="p1" a="#e8ad10" b="#c4780a" /><Grad id="p2" a="#fbd64c" b="#e7a80e" /><Grad id="p3" a="#fbe985" b="#f3cb3c" /><path d="M20 1h12v36H20z" fill="url(#p1)" /><path d="M12 10h12v27H12z" fill="url(#p2)" /><path d="M4 19h12v18H4z" fill="url(#p3)" /></Ico>],
];

export default function App() {
  return (
    <Screen>
      <Global />
      <TitleBar>
        <QuickAccess>
          <Line width="24" height="24" viewBox="0 0 24 24" $sw={1.8}>
            <path d="M1.500 1.500h21v21H5l-3.500-3.500zM6 2v9h12V2M7 22v-7h10v7M12 18v4" />
          </Line>
          <Line width="22" height="24" viewBox="0 0 22 24" $sw={1.8}>
            <path d="M2 2v8.500h8.500M2.500 10L8 4.500Q12.500 1 17 3.500q5 4 1.500 9L9 23" />
          </Line>
          <Line width="22" height="24" viewBox="0 0 22 24" $sw={1.8} $c="#b8b8b8">
            <path d="M20 2v8.500h-8.500M19.500 10L14 4.500Q9.500 1 5 3.500q-5 4-1.500 9L13 23" />
          </Line>
        </QuickAccess>
        <FileName>
          <Label $size={16.5} $ls={0.3} $color="#424242">BATCH10 • Last saved: Yesterday at 1:40 PM</Label>
          <Line width="12" height="8" viewBox="0 0 12 8" $sw={1.2} $mt={3}><path d="M1 .7h10L6 7z" /></Line>
        </FileName>
        <SearchBox>
          <Line width="24" height="24" viewBox="0 0 24 24" $c="#616161" $sw={1.600}>
            <circle cx="15.500" cy="8.500" r="7.500" /><path d="M10 14L1 23" />
          </Line>
          <Label $size={20} $ml={16} $pt={1} $ls={-0.45} $color="#616161">Search</Label>
        </SearchBox>
        <Account>
          <Label $size={17} $pt={1} $ls={0.25} $color="#424242">Sign in</Label>
          <svg width="30" height="30" viewBox="0 0 30 30"><circle cx="15" cy="15" r="15" fill="#e1e1e1" /><g fill="none" stroke="#5c5c5c" strokeWidth="1.700"><circle cx="15" cy="8.500" r="4.500" /><path d="M6.500 16h17v2.500q-1 7.500-8.500 7.500t-8.500-7.500z" /></g></svg>
        </Account>
        <WindowButtons>
          <Line width="16" height="16" viewBox="0 0 16 16"><path d="M0 8h16" /></Line>
          <Line width="16" height="16" viewBox="0 0 16 16"><rect x=".8" y=".8" width="14.400" height="14.400" rx="2" /></Line>
          <Line width="16" height="16" viewBox="0 0 16 16"><path d="M1 1l14 14M15 1L1 15" /></Line>
        </WindowButtons>
      </TitleBar>

      <TabRow>
        {TABS.map(([t, w, kind, ls]) => (
          <Tab key={t} $w={w}><TabText $kind={kind} $ls={ls}>{t}</TabText></Tab>
        ))}
        <ShareButton>
          <Line width="23" height="20" viewBox="0 0 23 20" $c="#fff">
            <path d="M5 4H1v15h15v-4M5 14q1-8 10-8.500V1l7 7-7 7v-4.500q-6-.5-10 3.500z" />
          </Line>
          <Label $size={17} $ml={13} $ls={-0.3} $color="#fff">Share</Label>
          <Chevron w={14} h={8} c="#fff" ml={7} />
        </ShareButton>
      </TabRow>

      <Ribbon>
        <Group $w={120}>
          <svg width="26" height="29" viewBox="0 0 26 29"><g fill="none" strokeWidth="2"><path d="M6 3.500H1.200V27H12M16 3.500h5V9" stroke="#d67b1e" /><path d="M4 5v20h8" stroke="#fbdd9a" /><path d="M6 9V5h3q0-4 2.500-4T14 5h3v4z" fill="#f5f5f5" stroke="#7a7a7a" strokeWidth="1.500" /><path d="M13 12h12v16H13z" fill="#fafafa" stroke="#424242" strokeWidth="1.800" /></g></svg>
          <Chevron ml={7} mt={2} c="#333" sw={1.800} />
          <Line width="28" height="26" viewBox="0 0 28 26" $ml={22} $sw={1.600}>
            <path d="M1 12l10-4 9 9-6 8L5 19l3-1z" fill="#fbd88a" stroke="#d67b1e" /><path d="M1 12l4 7 9-2 4-1-8-8z" fill="#fff" stroke="#d67b1e" /><path d="M10 8l4-3 4 3 6-7 2 1 1 2-7 6 3 4-3 3z" fill="#fff" />
          </Line>
        </Group>
        <Group $w={84} $pl={24}>
          <svg width="27" height="29" viewBox="0 0 27 29"><g fill="none" stroke="#424242" strokeWidth="1.700"><path d="M1 4v20q2 3 9 3.500M21 4v8" /><ellipse cx="11" cy="4" rx="10" ry="3.200" fill="#f5f5f5" /><path d="M11 12.500h15V28H11z" fill="#fff" /><path d="M11 14.500h15" stroke="#8a8a8a" strokeWidth="3" /><path d="M11 17.500h15M11 22.500h15M18.500 17v11" stroke="#6a6a6a" strokeWidth="1.400" /></g></svg>
          <Chevron ml={6} mt={1} c="#333" sw={1.800} />
        </Group>
        <Group $w={72} $pl={25}>
          <svg width="27" height="29" viewBox="0 0 27 29"><path d="M9 27H1V1h13l7 7v4" fill="#fafafa" stroke="#424242" strokeWidth="1.800" /><path d="M14 1v8h7" fill="none" stroke="#424242" strokeWidth="1.700" /><path d="M10 18q3-5 8-5 5 .5 7 4M26 12v6h-6M25 22q-3 5-8 5-4 0-7-4M9.500 28.500V22.500h6" fill="none" stroke="#33994d" strokeWidth="2" /></svg>
        </Group>
        <Group $w={72} $pl={24}>
          <svg width="27" height="29" viewBox="0 0 27 29"><path d="M17 7h6v9h-6z" fill="#c8c8c8" stroke="#8a8a8a" /><path d="M1 12h7v15H1z" fill="#83b9ec" stroke="#1267b4" strokeWidth="1.800" /><path d="M8 1h8v26H8z" fill="#fff" stroke="#424242" strokeWidth="1.800" /><path d="M20.500 16v13M14 22.500h13" stroke="#33994d" strokeWidth="2" /></svg>
        </Group>
        <Group $w={72} $pl={25}>
          <svg width="22" height="28" viewBox="0 0 22 28"><path d="M1 1h20v26H1z" fill="#fafafa" stroke="#424242" strokeWidth="2" /><path d="M5 5.500h12v3H5z" fill="#3f9ee6" stroke="#1267b4" /><g fill="#424242">{[12, 16.500, 21].map((y) => [5, 9.500, 14].map((x) => <rect key={x + "-" + y} x={x} y={y} width="3" height="3" />))}</g></svg>
        </Group>
        <Group $w={196} $pl={25}>
          <svg width="27" height="29" viewBox="0 0 27 29"><path d="M11 1.500H1V28h20V18" fill="#fafafa" stroke="#a5cbe2" strokeWidth="1.800" /><g fill="#fff" stroke="#9ccae6" strokeWidth="1.700"><path d="M4 16l6-6 6 6-6 7q-6-1-6-7z" /><path d="M12 8l3-4 7 8-3 4z" /><path d="M17 5l2-3 7 8-2 3z" /><path d="M20 4l4-4M23 8l4-4M18 2l3-2" /></g></svg>
          <Label $size={20} $ml={14} $pt={3} $ls={-0.1} $color="#c4c4c4">Sensitivity</Label>
          <Chevron ml={9} mt={3} c="#c4c4c4" />
        </Group>
        <Group $w={157} $pl={24}>
          <svg width="28" height="29" viewBox="0 0 28 29"><g fill="#fff" stroke="#424242" strokeWidth="1.700"><path d="M13 5V1h11v24H13" /><path d="M7 14V7h11v20H7" /><path d="M1 15h11v12H1z" /><path d="M12 27h6" /></g><path d="M20.500 29V15M14 21l6.500-7 6.500 7" fill="none" stroke="#fff" strokeWidth="5" /><path d="M20.500 29V14.500M14 21l6.500-7 6.500 7" fill="none" stroke="#1a83c8" strokeWidth="2" /></svg>
          <Label $size={20} $ml={14} $pt={3} $ls={-0.2}>Publish</Label>
        </Group>
        <Group $w={72} $pl={22}>
          <svg width="28" height="6" viewBox="0 0 28 6" fill="#333"><circle cx="3" cy="2" r="2.500" /><circle cx="13.800" cy="2" r="2.500" /><circle cx="24.500" cy="2" r="2.500" /></svg>
        </Group>
        <RibbonEnd><Chevron w={13} h={8} c="#252423" sw={2.400} /></RibbonEnd>
      </Ribbon>

      <Workspace>
        <Rail>
          <RailItem $active>
            <Line width="27" height="26" viewBox="0 0 27 26" $c="#252423" $sw={1.500}><path d="M3.500 2v20.500H24M7.500 13h3v6h-3zM12 9.500h3V19h-3zM16.500 11.500h3V19h-3zM21 5h3v14h-3z" /></Line>
          </RailItem>
          <RailItem>
            <Line width="27" height="24" viewBox="0 0 27 24" $sw={1.600}><path d="M3 1.500h22v20H3zM3 7.500h22M3 12h22M3 17h22M10 7v14.500M18 7v14.500" /><path d="M3 3h22" /></Line>
          </RailItem>
          <RailItem>
            <Line width="28" height="28" viewBox="0 0 28 28" $sw={1.600}><path d="M11 1h14v10H11zM11 4.500h14M1 9h8v10H1zM1 12.500h8M14 17h13v10H14zM14 20.500h13M9 14h9v3M18 11v3M5 19v4.500h9" /></Line>
          </RailItem>
          <RailItem>
            <svg width="28" height="28" viewBox="0 0 28 28"><path d="M4 10V1h12l5 5v5M16 1v5h5M4 21v6h10q7-1 8-6" fill="none" stroke="#424242" strokeWidth="1.600" /><text x="-1" y="20" fontFamily="Open Sans, sans-serif" fontSize="11" fontWeight="600" letterSpacing="-.3" fill="#424242">DAX</text></svg>
          </RailItem>
        </Rail>

        <Main>
          <Frame>
            <Report>
              <Banner>
                <BackArrow>
                  <Line width="32" height="32" viewBox="0 0 32 32" $c="#605e5c" $sw={3}><circle cx="16" cy="16" r="14" /><path d="M25 16H8M15.500 8L7.500 16l8 8" /></Line>
                </BackArrow>
                <BannerTitle>TELANGANA RAIN FALL DATA( BATCH 10)</BannerTitle>
              </Banner>
              <LegendTitle>Count of Month and Sum of Humidity (%) by District and Rainfall (mm)</LegendTitle>
              <Legend>
                <LegendName>Rainfall (mm)</LegendName>
                {LEGEND.map(([t, c]) => (
                  <LegendItem key={t} $c={c} $w={LEGEND_WIDTH[t.length]}>{t}</LegendItem>
                ))}
                <LegendNext><svg width="10" height="16" viewBox="0 0 10 16"><path d="M1.500 1.500L8.500 8l-7 6.500z" fill="#333" stroke="#fff" strokeWidth="1.600" /></svg></LegendNext>
              </Legend>
              <Visuals>
                <Slicer>
                  {HANDLES.map((h, i) => <Handle key={i} $at={h} />)}
                  <HoverBar>
                    <HoverButton><Line width="19" height="15" viewBox="0 0 19 15" $c="#605e5c"><path d="M0 1.500h19M3.500 7.500h12M7 13.500h5" /></Line></HoverButton>
                    <HoverButton><Line width="19" height="19" viewBox="0 0 19 19" $c="#605e5c" $sw={1.300} $mt={2}><path d="M10 1H4Q1 1 1 4v11q0 3 3 3h11q3 0 3-3v-5M12 1h6v6M18 1l-7 7M1 9h5q3 0 3 3v6" /></Line></HoverButton>
                    <HoverButton><svg width="18" height="5" viewBox="0 0 18 5" fill="#605e5c"><circle cx="3" cy="3.500" r="1.800" /><circle cx="9" cy="3.500" r="1.800" /><circle cx="15" cy="3.500" r="1.800" /></svg></HoverButton>
                  </HoverBar>
                  <SlicerHead>
                    <Label $din $size={14} $weight={500} $ls={0.17}>District, Rainfall (mm)</Label>
                    <Chevron w={12} h={7} mt={3} c="#605e5c" sw={1.200} />
                  </SlicerHead>
                  {DISTRICTS.map((d) => (
                    <SlicerRow key={d}>
                      <Chevron w={11} h={6} mt={-2} c="#605e5c" sw={1} />
                      <Check $on={d === "Warangal"} />
                      <Label $weight={700} $ls={-0.42} $pt={1}>{d}</Label>
                    </SlicerRow>
                  ))}
                </Slicer>
                <MapBox><Telangana /></MapBox>
                <Chart>
                  <ChartTitle>Sum of Rainfall (mm) by Month</ChartTitle>
                  <Plot>
                    <AxisName>Month</AxisName>
                    <Categories>{MONTHS.map(([m]) => <Category key={m}>{m}</Category>)}</Categories>
                    <Bars>{MONTHS.map(([m, w]) => <Bar key={m} style={{ width: w }} />)}</Bars>
                  </Plot>
                  <Ticks><span>0</span><span>500</span></Ticks>
                  <ValueAxis>Sum of Rainfall (mm)</ValueAxis>
                </Chart>
              </Visuals>
            </Report>
          </Frame>
          <PageBar>
            <ViewModes>
              <Mode $on><Line width="24" height="24" viewBox="0 0 24 24" $c="#252423" $sw={1.700}><rect x="1.500" y="2.500" width="21" height="16" rx="2.500" /><path d="M9 19v4M15 19v4M5 23h14" /></Line></Mode>
              <Mode><Line width="16" height="26" viewBox="0 0 16 26" $c="#252423" $sw={1.700}><rect x="1" y="1" width="14" height="24" rx="2.500" /><path d="M5.500 21h5" /></Line></Mode>
            </ViewModes>
            <PageArrows>
              <Line width="8" height="12" viewBox="0 0 8 12" $sw={1.100}><path d="M7 .8v10.400L1 6z" /></Line>
              <Line width="8" height="12" viewBox="0 0 8 12" $sw={1.100}><path d="M1 .8v10.400L7 6z" /></Line>
            </PageArrows>
            <PageTab><Label $size={17} $weight={600} $ls={-0.15} $pt={9}>Page 1</Label></PageTab>
            <AddPage><svg width="17" height="17" viewBox="0 0 17 17"><path d="M8.500 0v17M0 8.500h17" stroke="#fff" strokeWidth="4.500" /></svg></AddPage>
          </PageBar>
        </Main>

        <FilterPane $w={49} $white>
          <Collapse />
          <Line width="13" height="12" viewBox="0 0 13 12" $sw={1.700} $mt={31} $ml={7}><path d="M11.500 0v12M6.500 2v8M1.500 4.500v3" /></Line>
          <PaneName $mt={15} $mr={1} $ls={-0.2}>Filters</PaneName>
          <Tooltip><Label $ls={0.3} $color="#605e5c">Expand</Label></Tooltip>
        </FilterPane>
        <Pane $w={52}><Collapse /><PaneName $mt={27} $mr={5} $ls={0.2}>Visualizations</PaneName></Pane>
        <Pane $w={52}><Collapse /><PaneName $mt={27} $mr={5} $ls={-0.2}>Data</PaneName></Pane>
      </Workspace>

      <StatusBar>
        <Label $size={17} $pt={3} $ls={0.15} $color="#505050">Page 1 of 1</Label>
        <Spacer />
        <Line width="7" height="2" viewBox="0 0 7 2" $sw={2}><path d="M0 1h7" /></Line>
        <ZoomTrack />
        <Line width="11" height="11" viewBox="0 0 11 11" $sw={2}><path d="M0 5.500h11M5.500 0v11" /></Line>
        <Label $size={17} $ml={20} $ls={0.3} $color="#505050">69%</Label>
        <Line width="22" height="16" viewBox="0 0 22 16" $ml={29}><rect x="1" y="1" width="20" height="14" rx="2" /><path d="M8 4.500H5V7M5 9v2.500h3M14 4.500h3V7M17 9v2.500h-3" /></Line>
      </StatusBar>

      <Taskbar>
        <Weather>
          <svg width="48" height="42" viewBox="0 0 48 42">
            <Grad id="sun" a="#fcc70c" b="#e8590c" />
            <circle cx="18.500" cy="25" r="15" fill="url(#sun)" />
            <path d="M8 16h5M8 22h26M2 28h17M25 28h5M2 34h28" stroke="#6f6a66" strokeWidth="3" strokeLinecap="round" />
            <circle cx="29.500" cy="11.500" r="12" fill="#ff99a4" />
            <text x="29.500" y="17" textAnchor="middle" fontFamily="Open Sans, sans-serif" fontSize="15" fill="#111">3</text>
          </svg>
          <Lines $w={80}>
            <Label $size={16.5} $ls={0.2} $color="#fff">79°F</Label>
            <Label $size={16.5} $ls={0.1} $color="#c8c8c8">Haze</Label>
          </Lines>
        </Weather>
        <Apps>{APPS.map(([run, icon], i) => <AppSlot key={i} $run={run}>{icon}</AppSlot>)}</Apps>
        <Tray>
          <TrayIcon $w={48} $pt={21}><Line width="16" height="9" viewBox="0 0 16 9" $c="#fff"><path d="M.7 8L8 1l7.300 7" /></Line></TrayIcon>
          <Lines $w={36} $align="center"><Label $size={16.5} $color="#fff" $ls={0.2}>ENG</Label><Label $size={16.5} $color="#fff">IN</Label></Lines>
          <TrayIcon $w={35.500} $pt={15}><Line width="24" height="20" viewBox="0 0 24 20" $c="#fff" $sw={1.800} $ml={26}><path d="M1 8q11-11 22 0M4.500 11.500q7.500-7.500 15 0M8 15q4-4 8 0" /><circle cx="12" cy="17" r="1.200" fill="#fff" /></Line></TrayIcon>
          <TrayIcon $w={36} $pt={15}><Line width="25" height="20" viewBox="0 0 25 20" $c="#fff" $sw={1.600} $ml={26}><path d="M1 7h4l6-5v16l-6-5H1zM14 7q2 3 0 6" /><path d="M17.500 4.500q4 5.500 0 11M20.500 2q6 8 0 16" stroke="#5a5a5a" /></Line></TrayIcon>
          <TrayIcon $w={56} $pt={14}><Line width="26" height="21" viewBox="0 0 26 21" $ml={25}><path d="M12 6h10v12H4v-3" stroke="#fff" strokeWidth="1.800" /><path d="M23 10h2v4h-2z" fill="#fff" stroke="none" /><path d="M0 13q0-9 10-12 5 8 0 12-4 3-7 1l-2 3z" fill="#fff" stroke="none" /></Line></TrayIcon>
          <Lines $w={102} $align="flex-end"><Label $size={16.5} $color="#fff" $ls={0.35}>12:36 PM</Label><Label $size={16.5} $color="#fff" $ls={0.45}>1/24/2025</Label></Lines>
        </Tray>
      </Taskbar>
    </Screen>
  );
}
